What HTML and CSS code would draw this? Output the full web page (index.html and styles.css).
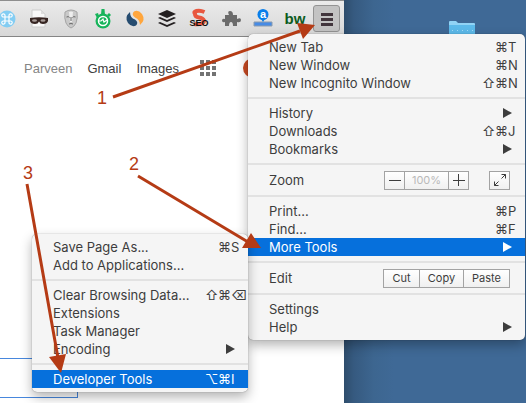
FILE: index.html
```html
<!DOCTYPE html>
<html lang="en">
<head>
<meta charset="utf-8">
<title>Developer Tools menu</title>
<link rel="stylesheet" href="styles.css">
</head>
<body>
<div class="screen">
  <main class="browser">
    <div class="toolbar">
      <svg class="ext" viewBox="0 0 20 20"><circle cx="10" cy="10" r="8.500" fill="#83cdf3"/><path d="M8 8h4v4H8zM8 8H6.500a1.600 1.600 0 1 1 1.500-1.500zM12 8V6.500a1.600 1.600 0 1 1 1.500 1.500zM12 12h1.500a1.600 1.600 0 1 1-1.500 1.500zM8 12v1.500a1.600 1.600 0 1 1-1.500-1.500z" fill="none" stroke="#fff" stroke-width="1.200"/></svg>
      <svg class="ext" viewBox="0 0 20 20"><path d="M3 1h9l4 4v13H3z" fill="#f8f8f8" stroke="#ccc"/><path d="M12 1v4h4" fill="#ddd"/><path d="M1 9q9-1.500 18 0v3q-1 3-5 3-3 0-4-2.500Q9 15 6 15q-4 0-5-3z" fill="#362522"/><ellipse cx="5.500" cy="11.500" rx="2.500" ry="1.200" fill="#a79c98"/><ellipse cx="14" cy="11.500" rx="2.500" ry="1.200" fill="#a79c98"/></svg>
      <svg class="ext" viewBox="0 0 20 20"><path d="M4 3q6-4 12 0 1 6-1 11-2 4-5 5-3-1-5-5Q3 9 4 3z" fill="#c9c9c9" stroke="#a5a5a5"/><path d="M8 3q2-1 4 0l-1 10H9z" fill="#eee"/><path d="M5.500 8q2-1 3 .5M11.500 8.500q1-1.500 3-.5M10 8v4M8 15q2-1 4 0" fill="none" stroke="#666"/></svg>
      <svg class="ext" viewBox="0 0 20 20"><path d="M8.500 0h3l.5 6H8zM2 5l3-1 1 3-2 2zM18 6l-2-2-2 2 2 2z" fill="#17b45b"/><circle cx="10" cy="12" r="7.500" fill="#17b45b"/><circle cx="10" cy="12" r="4.500" fill="none" stroke="#fff" stroke-width="1.500"/><path d="M6 12h2l2-2 1 3 3-2" fill="none" stroke="#fff" stroke-width="1.200"/></svg>
      <svg class="ext" viewBox="0 0 20 20"><path d="M5 3Q-1 8 3 14q4 5 8 2.500 3-3-1-6Q5 9 5 3z" fill="#264c70"/><path d="M15 16q6-5 2-11-4-5-8-2.500-3 3 1 6 5 2 5 7.500z" fill="#ffa63d"/></svg>
      <svg class="ext" viewBox="0 0 20 20"><g fill="#231f20"><path d="M10 1l9 4-9 4-9-4z"/><path d="M1 9l2-1 7 3 7-3 2 1-9 4z"/><path d="M1 14l2-1 7 3 7-3 2 1-9 4z"/></g></svg>
      <svg class="ext" viewBox="0 0 20 20"><path d="M15.500 3Q11 1 7.500 2T6 5q0 3 4 3.500t5 3Q15 16 5 15" fill="none" stroke="#e8573f" stroke-width="4"/><text x="10" y="17" class="seo">SEO</text></svg>
      <svg class="ext" viewBox="0 0 20 20"><path d="M4 6h4Q6 2 9 2t3 4h4v4q4-2 4 1t-4 2v4h-4q0-4-2-4t-2 4H4v-4q-3 1-3-1.500T4 10z" fill="#6b6b6b"/></svg>
      <svg class="ext" viewBox="0 0 20 20"><path d="M1 13v4h18v-4z" fill="#478be5" stroke="#8c9bad"/><circle cx="10" cy="5.500" r="5.500" fill="#087eea"/><path d="M8 10l2 3 2-3z" fill="#087eea"/><text x="10" y="9" class="letter-a">a</text></svg>
      <svg class="ext" viewBox="0 0 20 20"><text x="10" y="15" class="bw">bw</text></svg>
      <button class="menu-button" type="button" aria-label="Menu"><svg viewBox="0 0 14 14"><path d="M1 2.500h12M1 7.500h12M1 12.500h12" stroke="#42363d" stroke-width="3"/></svg></button>
    </div>
    <nav class="links">
      <a class="user" href="#">Parveen</a>
      <a href="#">Gmail</a>
      <a href="#">Images</a>
      <svg class="apps" viewBox="0 0 16 16"><path d="M0 2h16M0 8h16M0 14h16" stroke="#737373" stroke-width="4" stroke-dasharray="4 2"/></svg>
      <span class="avatar"></span>
    </nav>
    <div class="field"></div>
  </main>
  <aside class="desktop">
    <svg class="folder" viewBox="0 0 26 20"><path d="M0 2q0-1 1-1h6l2 2h16q1 0 1 1v16H0z" fill="#91d3f5"/><path d="M0 5h26v15H0z" fill="#5dbaea"/><path d="M3 10.500h22" stroke="#a3dcf8" stroke-dasharray="1 4"/></svg>
  </aside>

  <section class="menu main-menu">
    <div class="row"><span>New Tab</span><span class="keys"><kbd>⌘</kbd><kbd>T</kbd></span></div>
    <div class="row"><span>New Window</span><span class="keys"><kbd>⌘</kbd><kbd>N</kbd></span></div>
    <div class="row"><span>New Incognito Window</span><span class="keys"><kbd>⇧</kbd><kbd>⌘</kbd><kbd>N</kbd></span></div>
    <hr>
    <div class="row"><span>History</span><i class="more"></i></div>
    <div class="row"><span>Downloads</span><span class="keys"><kbd>⇧</kbd><kbd>⌘</kbd><kbd>J</kbd></span></div>
    <div class="row"><span>Bookmarks</span><i class="more"></i></div>
    <hr>
    <div class="row tools">
      <span>Zoom</span>
      <div class="group zoom">
        <button type="button" aria-label="Zoom out"><svg viewBox="0 0 12 12"><path d="M0 6.500h12"/></svg></button>
        <button type="button" class="level" disabled>100%</button>
        <button type="button" aria-label="Zoom in"><svg viewBox="0 0 12 12"><path d="M0 6.500h12M5.500 0v12"/></svg></button>
      </div>
      <div class="group">
        <button type="button" class="full" aria-label="Full screen"><svg viewBox="0 0 14 14"><path d="M8.500 5.500l4-4M8.500 1.500h4v4M5.500 8.500l-4 4M1.500 8.500v4h4"/></svg></button>
      </div>
    </div>
    <hr>
    <div class="row"><span>Print...</span><span class="keys"><kbd>⌘</kbd><kbd>P</kbd></span></div>
    <div class="row"><span>Find...</span><span class="keys"><kbd>⌘</kbd><kbd>F</kbd></span></div>
    <div class="row active"><span>More Tools</span><i class="more"></i></div>
    <hr>
    <div class="row tools">
      <span>Edit</span>
      <div class="group edit">
        <button type="button">Cut</button>
        <button type="button">Copy</button>
        <button type="button">Paste</button>
      </div>
    </div>
    <hr>
    <div class="row"><span>Settings</span></div>
    <div class="row"><span>Help</span><i class="more"></i></div>
  </section>

  <section class="menu sub-menu">
    <div class="row"><span>Save Page As...</span><span class="keys"><kbd>⌘</kbd><kbd>S</kbd></span></div>
    <div class="row"><span>Add to Applications...</span></div>
    <hr>
    <div class="row"><span>Clear Browsing Data...</span><span class="keys"><kbd>⇧</kbd><kbd>⌘</kbd><kbd>⌫</kbd></span></div>
    <div class="row"><span>Extensions</span></div>
    <div class="row"><span>Task Manager</span></div>
    <div class="row"><span>Encoding</span><i class="more"></i></div>
    <hr>
    <div class="row active"><span>Developer Tools</span><span class="keys"><kbd>⌥</kbd><kbd>⌘</kbd><kbd>I</kbd></span></div>
  </section>

  <svg class="notes" viewBox="0 0 526 403">
    <path d="M113 97L300 31M138 176L248 242M27 184L58 358" stroke="#b53b15" stroke-width="3"/>
    <path d="M315 25L297 23L303 39zM261 248L251 233L242 248zM61 373L49 357L66 354z" fill="#b53b15"/>
    <text x="102" y="104">1</text>
    <text x="134" y="170">2</text>
    <text x="28" y="179">3</text>
  </svg>
</div>
</body>
</html>
```
FILE: styles.css
```css
* { box-sizing: border-box; }

body {
  margin: 0;
  font-family: Inter, "Liberation Sans", sans-serif;
  font-size: 13px;
  color: #3d3d3d;
}

.screen {
  position: relative;
  display: flex;
  min-height: 100vh;
  overflow: hidden;
}

.browser {
  flex: 344 0 0;
  min-width: 0;
  display: flex;
  flex-direction: column;
  background: #fff;
}

.desktop {
  flex: 182 0 0;
  min-width: 0;
  background: linear-gradient(90deg, #2e4d6c, #365a80 10px, #3d6690 30px, #3f6996 50px);
}

.folder { display: block; width: 26px; margin: 20px 0 0 105px; }

.toolbar {
  display: flex;
  align-items: center;
  gap: 12px;
  height: 37px;
  border-top: 1px solid #8e8e8e;
  border-bottom: 1px solid #858585;
  background: linear-gradient(#ebebeb, #d8d8d8);
}

.ext { flex: none; width: 20px; height: 20px; overflow: visible; }
.ext:first-child { margin-left: -3px; }

.seo { font: bold 9px "Liberation Sans", sans-serif; text-anchor: middle; fill: #111; }
.letter-a { font: bold 11px "Liberation Sans", sans-serif; text-anchor: middle; fill: #fff; }
.bw { font: bold 15px "Liberation Sans", sans-serif; text-anchor: middle; fill: #0c5b20; }

.menu-button {
  flex: none;
  display: grid;
  place-items: center;
  width: 27px;
  height: 27px;
  margin-left: -4px;
  padding: 0;
  border: 1px solid #939393;
  border-radius: 3px;
  background: #c3c3c3;
}
.menu-button svg { width: 14px; height: 14px; }

.links {
  display: flex;
  align-items: center;
  height: 62px;
  padding-left: 24px;
  font-family: "Liberation Sans", sans-serif;
}
.links a { margin-right: 15px; color: #404040; text-decoration: none; }
.links .user { color: #858585; }
.apps { flex: none; width: 16px; margin: 0 27px 0 6px; }
.avatar { flex: none; width: 20px; height: 20px; border-radius: 50%; background: #c84a22; }

.field {
  width: 78px;
  height: 40px;
  margin: auto 0 5px;
  border: 1px solid #4787dd;
  border-left: 0;
}

.menu {
  position: absolute;
  padding: 4px 0;
  border-radius: 5px;
  background: #f5f5f5;
  box-shadow: 0 0 1px rgba(0, 0, 0, .5), 0 5px 12px rgba(0, 0, 0, .3);
}
.main-menu { top: 34px; right: 1px; width: 277px; }
.sub-menu { top: 234px; right: 278px; width: 216px; }

.row {
  display: flex;
  align-items: center;
  justify-content: space-between;
  height: 18px;
  padding: 0 4px 0 21px;
  line-height: 18px;
  white-space: nowrap;
}
.active { background: #0670dc; color: #fff; }

.keys { display: flex; }
kbd { width: 13px; font: 13px/18px Inter, "DejaVu Sans", sans-serif; }

.more {
  margin-right: 9px;
  border-left: 9px solid currentColor;
  border-top: 5px solid transparent;
  border-bottom: 5px solid transparent;
}

.menu hr {
  height: 2px;
  margin: 5px 0;
  border: 0;
  background: #e2e2e2;
}

.tools { height: 20px; padding-right: 15px; }
.tools > span { flex: 1; }
.group { display: flex; border: 1px solid #a3a3a3; }
.group button {
  display: grid;
  place-items: center;
  height: 17px;
  padding: 0;
  border: 0;
  background: linear-gradient(#fff, #f0f0f0);
  color: #3d3d3d;
  font: 11px Inter, sans-serif;
}
.group button + button { border-left: 1px solid #a3a3a3; }
.group svg { width: 12px; height: 12px; fill: none; stroke: #3d3d3d; }
.group .full svg { width: 14px; height: 14px; }
.zoom { margin-right: 20px; }
.zoom button, .group .full { width: 19px; }
.zoom button:last-child { width: 20px; }
.group .level { width: 44px; color: #b9b9b9; }
.edit button { width: 35px; }
.edit button:nth-child(2) { width: 44px; }
.edit button:nth-child(3) { width: 46px; }

.notes {
  position: absolute;
  top: 0;
  left: 0;
  width: 526px;
  height: 403px;
  pointer-events: none;
}
.notes text {
  font: 18px "Liberation Sans", sans-serif;
  text-anchor: middle;
  fill: #b53b15;
}
```
